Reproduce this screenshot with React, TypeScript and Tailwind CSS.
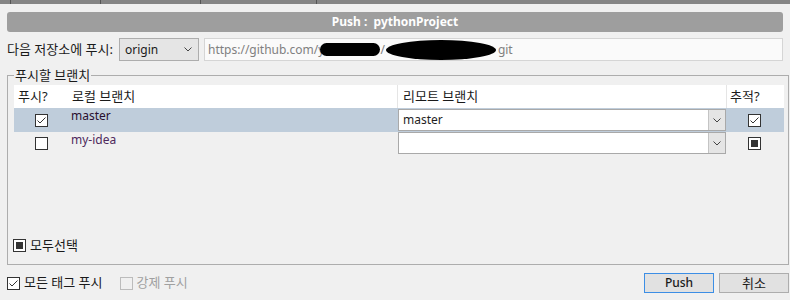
import React from "react";

type BoxState = "on" | "off" | "mixed";

const Check = ({ state, disabled }: { state: BoxState; disabled?: boolean }) => (
    <span
        className={`flex h-[13px] w-[13px] shrink-0 items-center justify-center border ${
            disabled ? "border-[#bcbcbc] bg-[#f0f0f0]" : "border-[#333333] bg-white"
        }`}
    >
        {state === "on" && (
            <svg width="11" height="11" viewBox="0 0 11 11">
                <path d="M1.5 5.5 L4 8 L9.5 2.5" fill="none" stroke="#333" strokeWidth="1" />
            </svg>
        )}
        {state === "mixed" && <span className="h-[7px] w-[7px] bg-[#333333]" />}
    </span>
);

const Chevron = () => (
    <svg width="8" height="5" viewBox="0 0 8 5">
        <path d="M0.5 0.5 L4 4 L7.5 0.5" fill="none" stroke="#444" strokeWidth="1" />
    </svg>
);

const Combo = ({ value }: { value?: string }) => (
    <div className="flex h-full w-full border border-[#a9a9a9] bg-white">
        <span className="flex flex-1 items-center pl-[4px] text-[#1e1e1e]">{value}</span>
        <span className="flex w-[17px] items-center justify-center border-l border-[#c4c4c4] bg-[#e5e5e5]">
            <Chevron />
        </span>
    </div>
);

const branches = [
    { name: "master", push: "on" as BoxState, remote: "master", track: "on" as BoxState, selected: true },
    { name: "my-idea", push: "off" as BoxState, remote: "", track: "mixed" as BoxState, selected: false },
];

const seps = [10, 100, 200, 316];

export default function App() {
    return (
        <div className="h-[300px] w-[790px] overflow-hidden bg-[#f0f0f0] text-[12px] text-[#1a1a1a] font-['Noto_Sans','Noto_Sans_CJK_KR',sans-serif]">
            {/* cut-off toolbar at the very top */}
            <div className="flex h-[4px] bg-[#858585]">
                {seps.map((x, i) => (
                    <span key={i} className="h-full w-px bg-[#555]" style={{ marginLeft: i === 0 ? x : x - seps[i - 1] - 1 }} />
                ))}
            </div>

            <div className="mx-[7px] mt-[8px] flex h-[20px] items-center justify-center whitespace-pre rounded-[3px] bg-[#9e9e9e] text-[12px] font-bold text-white">
                Push :  pythonProject
            </div>

            <div className="mt-[6px] flex h-[23px] items-stretch pl-[7px] pr-[7px]">
                <span className="flex w-[112px] items-center text-[13px]">다음 저장소에 푸시:</span>
                <div className="flex w-[80px] items-center justify-between border border-[#adadad] bg-[#e5e5e5] pl-[5px] pr-[6px]">
                    <span>origin</span>
                    <Chevron />
                </div>
                <div className="ml-[5px] flex flex-1 items-center border border-[#d5d5d5] bg-[#fafafa] pl-[3px] text-[#808080]">
                    <span>https://github.com/y</span>
                    <span className="-ml-[4px] h-[13px] w-[60px] rounded-full bg-black" />
                    <span>/</span>
                    <span className="ml-[1px] h-[20px] w-[110px] rounded-[50%] bg-black" />
                    <span className="ml-[2px]">git</span>
                </div>
            </div>

            <fieldset className="mt-[6px] ml-[7px] w-[782px] border border-[#adadad] pl-[6px] pr-[4px]">
                <legend className="px-[1px] text-[13px] leading-[16px]">푸시할 브랜치</legend>
                <div className="mt-[2px] flex h-[179px] flex-col">
                    <div className="grid h-[23px] grid-cols-[53px_330px_329px_1fr] bg-white text-[13px]">
                        <span className="flex items-center pl-[4px]">푸시?</span>
                        <span className="flex items-center pl-[5px]">로컬 브랜치</span>
                        <span className="flex items-center border-l border-[#e5e5e5] pl-[5px]">리모트 브랜치</span>
                        <span className="flex items-center border-l border-[#e5e5e5] pl-[3px]">추적?</span>
                    </div>
                    {branches.map((b, i) => (
                        <div
                            key={b.name}
                            className={`grid grid-cols-[53px_330px_329px_1fr] ${i === 0 ? "h-[24px] bg-[#bfcddb]" : "h-[23px]"}`}
                        >
                            <span className="flex items-center justify-center pl-[1px]">
                                <Check state={b.push} />
                            </span>
                            <span className={`pl-[4px] leading-[16px] ${i === 0 ? "text-[#2a0f2e]" : "text-[#4e2a5c]"}`}>{b.name}</span>
                            <span className={i === 0 ? "py-[1px] pl-[1px]" : "pb-[1px] pl-[1px]"}>
                                <Combo value={b.remote} />
                            </span>
                            <span className="flex items-center justify-center pr-[1px]">
                                <Check state={b.track} />
                            </span>
                        </div>
                    ))}
                    <div className="flex-1" />
                    <div className="mb-[9px] -ml-px flex items-center gap-[4px]">
                        <Check state="mixed" />
                        <span className="text-[13px]">모두선택</span>
                    </div>
                </div>
            </fieldset>

            <div className="mt-[8px] flex h-[20px] items-center pl-[7px] pr-[1px] text-[13px]">
                <Check state="on" />
                <span className="ml-[4px]">모든 태그 푸시</span>
                <span className="ml-[17px]">
                    <Check state="off" disabled />
                </span>
                <span className="ml-[4px] text-[#a0a0a0]">강제 푸시</span>
                <div className="ml-auto flex h-full gap-[5px]">
                    <button className="w-[70px] border border-[#3c8ee5] bg-[#e1e1e1] text-[12px] font-medium text-[#1a1a1a]">Push</button>
                    <button className="w-[70px] border border-[#adadad] bg-[#e1e1e1] text-[#1a1a1a]">취소</button>
                </div>
            </div>
        </div>
    );
}
